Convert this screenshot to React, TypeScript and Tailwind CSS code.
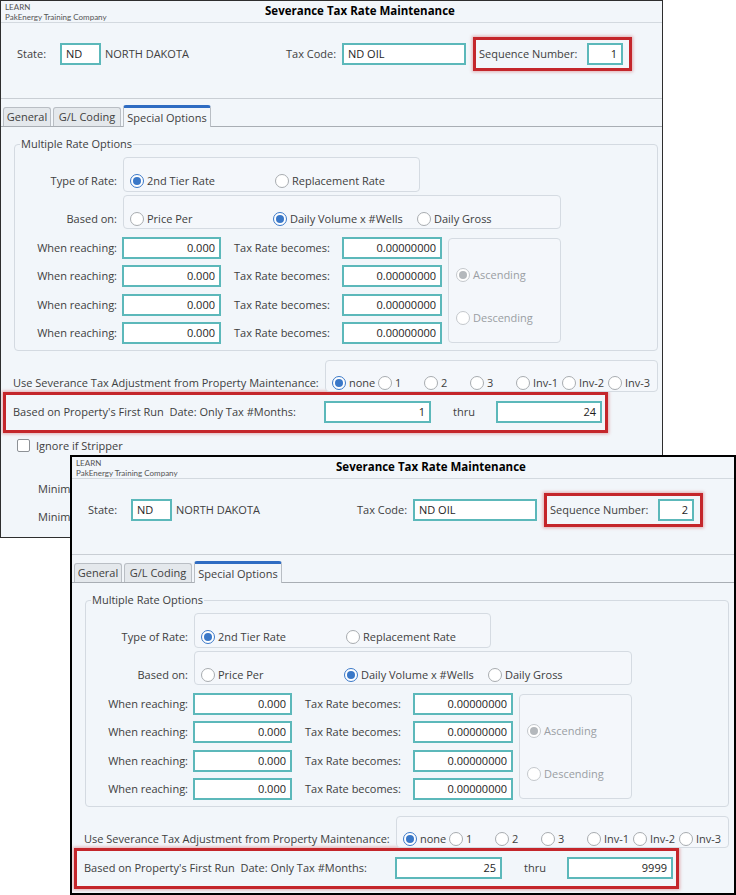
import type { ReactNode } from 'react';

type BoxProps = { value: string; w: string; left?: boolean };

function TextBox({ value, w, left }: BoxProps) {
  return (
    <div
      className={`${w} h-[22px] shrink-0 bg-white border-2 border-[#5cb8ba] flex items-center px-[4px] text-[#1e1e1e] ${
        left ? 'justify-start' : 'justify-end'
      }`}
    >
      {value}
    </div>
  );
}

type RadioProps = { label: string; on?: boolean; dim?: boolean; w?: string };

function Radio({ label, on, dim, w = '' }: RadioProps) {
  const ring = dim ? 'border-[#c4c8cc]' : on ? 'border-[#3a78c8]' : 'border-[#a8acb0]';
  const dot = dim ? 'bg-[#b4b8bc]' : 'bg-[#3a78c8]';
  return (
    <span className={`flex items-center gap-[3px] h-[16px] shrink-0 ${w}`}>
      <span className={`w-[14px] h-[14px] rounded-full border ${ring} bg-white flex items-center justify-center`}>
        {on && <span className={`w-[8px] h-[8px] rounded-full ${dot}`} />}
      </span>
      <span className={dim ? 'text-[#9a9ea3]' : ''}>{label}</span>
    </span>
  );
}

function Panel({ className, children }: { className: string; children: ReactNode }) {
  return <div className={`border border-[#d5dbe2] rounded-[4px] bg-[#f4f7fb] ${className}`}>{children}</div>;
}

type WinProps = { seq: string; from: string; thru: string; className: string };

function FormWindow({ seq, from, thru, className }: WinProps) {
  const rows = [0, 1, 2, 3];
  return (
    <div className={`bg-[#f2f6fa] overflow-hidden whitespace-nowrap text-[11px] leading-[16px] text-[#404040] ${className}`}>
      {/* title bar */}
      <div className="h-[22px] flex border-b border-[#d3d9df]">
        <div className="w-[264px] pl-[4px] pt-[1px] text-[8px] leading-[10px] text-[#555] font-['Lato',sans-serif]">
          <div>LEARN</div>
          <div>PakEnergy Training Company</div>
        </div>
        <div className="pt-[2px] text-[11.5px] font-bold text-black">Severance Tax Rate Maintenance</div>
      </div>

      {/* key fields */}
      <div className="h-[76px] pt-[14px] border-b border-[#c9ced4]">
        <div className="flex items-center h-[34px]">
          <span className="ml-[16px] w-[43px]">State:</span>
          <TextBox w="w-[41px]" left value="ND" />
          <span className="ml-[4px] w-[181px]">NORTH DAKOTA</span>
          <span className="w-[56px]">Tax Code:</span>
          <TextBox w="w-[124px]" left value="ND OIL" />
          <div className="ml-[7px] w-[159px] h-[34px] border-[3px] border-[#c4262b] shadow-[0_0_3px_1px_rgba(196,38,43,0.35)] flex items-center">
            <span className="ml-[3px] w-[108px]">Sequence Number:</span>
            <TextBox w="w-[36px]" value={seq} />
          </div>
        </div>
      </div>

      {/* tabs */}
      <div className="h-[28px] flex items-end gap-[2px] pl-[2px] border-b border-[#a9aeb4]">
        <div className="w-[48px] h-[19px] border border-b-0 border-[#b9bec4] rounded-t-[3px] bg-[#e4e8ec] flex items-center justify-center">
          General
        </div>
        <div className="w-[68px] h-[19px] border border-b-0 border-[#b9bec4] rounded-t-[3px] bg-[#e4e8ec] flex items-center justify-center">
          G/L Coding
        </div>
        <div className="w-[88px] h-[22px] -mb-px border border-b-0 border-[#b9bec4] border-t-[3px] border-t-[#2f6cc2] rounded-t-[3px] bg-[#f2f6fa] flex items-center justify-center">
          Special Options
        </div>
      </div>

      {/* multiple rate options */}
      <fieldset className="ml-[13px] mt-[9px] w-[644px] border border-[#d4dae1] rounded-[4px] pb-[6px]">
        <legend className="ml-[5px] px-[1px]">Multiple Rate Options</legend>
        <div className="flex items-end mt-[5px]">
          <span className="w-[102px] text-right pb-[3px]">Type of Rate:</span>
          <Panel className="ml-[6px] w-[297px] h-[35px] flex items-end pb-[2px] pl-[6px]">
            <Radio on label="2nd Tier Rate" w="w-[145px]" />
            <Radio label="Replacement Rate" />
          </Panel>
        </div>
        <div className="flex items-end mt-[3px]">
          <span className="w-[102px] text-right pb-[2px]">Based on:</span>
          <Panel className="ml-[6px] w-[438px] h-[34px] flex items-end pb-[1px] pl-[6px]">
            <Radio label="Price Per" w="w-[143px]" />
            <Radio on label="Daily Volume x #Wells" w="w-[144px]" />
            <Radio label="Daily Gross" />
          </Panel>
        </div>
        <div className="flex mt-[8px]">
          <div className="flex flex-col gap-[7.5px]">
            {rows.map(r => (
              <div key={r} className="flex items-center h-[21px]">
                <span className="w-[102px] text-right">When reaching:</span>
                <div className="ml-[5px]">
                  <TextBox w="w-[99px]" value="0.000" />
                </div>
                <span className="ml-[13px] w-[108px]">Tax Rate becomes:</span>
                <TextBox w="w-[100px]" value="0.00000000" />
              </div>
            ))}
          </div>
          <Panel className="ml-[6px] mt-[1px] w-[113px] h-[105px] flex flex-col pl-[7px] pt-[28px]">
            <Radio on dim label="Ascending" />
            <div className="mt-[27px]">
              <Radio dim label="Descending" />
            </div>
          </Panel>
        </div>
      </fieldset>

      {/* adjustment */}
      <div className="flex items-end mt-[9px]">
        <span className="ml-[12px] w-[312px] pb-[1px]">Use Severance Tax Adjustment from Property Maintenance:</span>
        <Panel className="w-[333px] h-[32px] flex items-end pl-[6px]">
          <Radio on label="none" w="w-[46px]" />
          <Radio label="1" w="w-[46px]" />
          <Radio label="2" w="w-[46px]" />
          <Radio label="3" w="w-[46px]" />
          <Radio label="Inv-1" w="w-[46px]" />
          <Radio label="Inv-2" w="w-[46px]" />
          <Radio label="Inv-3" />
        </Panel>
      </div>

      {/* first run months */}
      <div className="ml-[2px] w-[605px] h-[41px] border-[3px] border-[#c4262b] shadow-[0_0_3px_1px_rgba(196,38,43,0.35)] flex items-center pl-[7px]">
        <span className="w-[311px]">Based on Property's First Run&nbsp; Date: Only Tax #Months:</span>
        <TextBox w="w-[107px]" value={from} />
        <span className="ml-[22px] w-[43px]">thru</span>
        <TextBox w="w-[106px]" value={thru} />
      </div>

      <div className="flex items-center mt-[5px] ml-[16px]">
        <span className="w-[13px] h-[13px] border border-[#8d9196] bg-white rounded-[2px]" />
        <span className="ml-[6px]">Ignore if Stripper</span>
      </div>
      <div className="ml-[37px] mt-[27px]">Minimum Tax Amount:</div>
      <div className="ml-[37px] mt-[12px]">Minimum Tax Rate:</div>
    </div>
  );
}

export default function App() {
  return (
    <div className="relative w-[736px] h-[895px] bg-white overflow-hidden font-['Open_Sans',sans-serif]">
      <FormWindow seq="1" from="1" thru="24" className="w-[663px] h-[538px] border border-[#2e2e2e]" />
      <FormWindow
        seq="2"
        from="25"
        thru="9999"
        className="absolute left-[70px] top-[455px] w-[666px] h-[440px] border-2 border-black"
      />
    </div>
  );
}
